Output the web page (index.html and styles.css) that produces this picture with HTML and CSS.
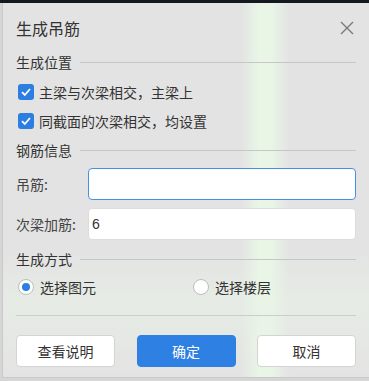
FILE: index.html
```html
<!DOCTYPE html>
<html lang="zh">
<head>
<meta charset="utf-8">
<link rel="stylesheet" href="styles.css">
</head>
<body>
<div class="topstrip"></div>
<div class="dialog">
  <div class="titlebar">
    <span class="title">生成吊筋</span>
    <svg class="close" width="14" height="14" viewBox="0 0 14 14"><path d="M1 1L13 13M13 1L1 13" stroke="#7a7a7a" stroke-width="1.4" fill="none"/></svg>
  </div>

  <div class="section s1"><span>生成位置</span><i class="rule"></i></div>
  <label class="check"><span class="box"><svg width="12" height="12" viewBox="0 0 12 12"><path d="M2 6.2L4.8 9L10 3" stroke="#fff" stroke-width="1.8" fill="none"/></svg></span>主梁与次梁相交，主梁上</label>
  <label class="check"><span class="box"><svg width="12" height="12" viewBox="0 0 12 12"><path d="M2 6.2L4.8 9L10 3" stroke="#fff" stroke-width="1.8" fill="none"/></svg></span>同截面的次梁相交，均设置</label>

  <div class="section s2"><span>钢筋信息</span><i class="rule"></i></div>
  <div class="field f1"><span class="lbl">吊筋:</span><div class="input focus"></div></div>
  <div class="field f2"><span class="lbl">次梁加筋:</span><div class="input">6</div></div>

  <div class="section s3"><span>生成方式</span><i class="rule"></i></div>
  <div class="radios">
    <span class="radio first"><span class="dot on"></span>选择图元</span>
    <span class="radio"><span class="dot"></span>选择楼层</span>
  </div>

  <div class="sep"></div>
  <div class="buttons">
    <span class="btn">查看说明</span>
    <span class="btn primary">确定</span>
    <span class="btn">取消</span>
  </div>
</div>
</body>
</html>
```
FILE: styles.css
```css
html, body { margin: 0; padding: 0; }
body {
  width: 369px; height: 381px; overflow: hidden;
  background: #d6d6d6;
  font-family: "Noto Sans CJK SC", "Noto Sans", sans-serif;
  color: #333;
  font-size: 14px;
}
.topstrip { height: 3px; background: #14181f; }
.dialog {
  margin-left: 2px;
  height: 375px;
  box-sizing: border-box;
  padding: 14px 13px 0 13px;
  border-left: 1px solid #c9c9c9;
  border-bottom: 1px solid #c9c9c9;
  background:
    linear-gradient(to bottom, rgba(227,227,227,0) 0, rgba(227,227,227,0) 250px, rgba(232,242,230,0.6) 300px, rgba(227,227,227,0) 375px),
    linear-gradient(to right, #e3e3e3 0, #e3e3e3 238px, #e9f6e6 256px, #e9f6e6 268px, #e3e3e3 286px, #e3e3e3 100%);
  display: flex; flex-direction: column;
}
.titlebar { display: flex; align-items: center; justify-content: space-between; height: 22px; }
.title { font-size: 16px; line-height: 22px; }
.close { margin-right: 2px; }
.section { display: flex; align-items: center; height: 20px; line-height: 20px; }
.section .rule { flex: 1; height: 1px; background: #c6c6c6; margin-left: 8px; }
.s1 { margin-top: 13px; }
.s2 { margin-top: 5px; }
.s3 { margin-top: 9px; }
.check { display: flex; align-items: center; height: 29px; }
.s1 + .check { margin-top: 5px; }
.box {
  width: 16px; height: 16px; border-radius: 3px; background: #2c7ee0;
  display: flex; align-items: center; justify-content: center;
  margin-left: 2px; margin-right: 5px;
}
.field { display: flex; align-items: center; height: 32px; }
.f1 { margin-top: 8px; }
.f2 { margin-top: 8px; }
.lbl { width: 72px; color: #444; }
.input {
  flex: 1; height: 32px; box-sizing: border-box;
  background: #fff; border: 1px solid #dcdcdc; border-radius: 4px;
  padding-left: 3px; line-height: 30px; font-size: 14px; color: #333;
  font-family: "Liberation Sans", sans-serif;
}
.input.focus { border-color: #4a8fe6; }
.radios { display: flex; align-items: center; height: 28px; margin-top: 4px; }
.radio { display: flex; align-items: center; }
.radio.first { width: 175px; }
.dot {
  width: 16px; height: 16px; box-sizing: border-box; border-radius: 50%;
  background: #fff; border: 1px solid #bdbdbd;
  margin-left: 2px; margin-right: 6px; position: relative;
}
.dot.on::after {
  content: ""; position: absolute; left: 3px; top: 3px;
  width: 8px; height: 8px; border-radius: 50%; background: #2c7ee0;
}
.sep { height: 1px; background: #cdcdcd; margin-top: 14px; }
.buttons { display: flex; justify-content: space-between; margin-top: 19px; }
.btn {
  width: 99px; height: 32px; box-sizing: border-box;
  background: #fff; border: 1px solid #d4d4d4; border-radius: 4px;
  display: flex; align-items: center; justify-content: center;
  color: #333;
}
.btn.primary { background: #2e80e2; border-color: #2e80e2; color: #fff; }
```
